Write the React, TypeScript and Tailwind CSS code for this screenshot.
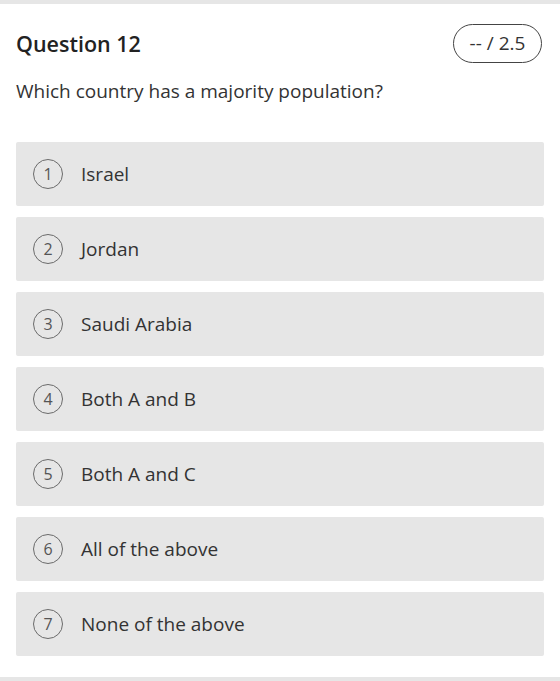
const options = [
  "Israel",
  "Jordan",
  "Saudi Arabia",
  "Both A and B",
  "Both A and C",
  "All of the above",
  "None of the above",
];

export default function App() {
  return (
    <div
      className="w-[560px] h-[681px] bg-white flex flex-col text-[#333333]"
      style={{ fontFamily: '"Open Sans", sans-serif' }}
    >
      <div className="h-[4px] bg-[#e6e6e6]" />
      <div className="flex-1 px-4">
        <div className="flex items-center justify-between pt-[20px]">
          <h2 className="text-[21.5px] font-semibold text-[#222222] leading-[30px]">Question 12</h2>
          <div className="h-[39px] w-[89px] rounded-full border-[1.5px] border-[#444444] flex items-center justify-center text-[19px] text-[#333333] mr-[2px]">
            -- / 2.5
          </div>
        </div>
        <p className="mt-[14px] text-[19px] leading-[28px] text-[#333333]">
          Which country has a majority population?
        </p>
        <ul className="mt-[37px] flex flex-col gap-[11px]">
          {options.map((opt, i) => (
            <li
              key={opt}
              className="h-[64px] bg-[#e6e6e6] rounded-[2px] flex items-center pl-[17px]"
            >
              <span className="w-[30px] h-[30px] rounded-full border-[1.5px] border-[#6b6b6b] flex items-center justify-center text-[16px] text-[#555555]">
                {i + 1}
              </span>
              <span className="ml-[18px] text-[19px] text-[#333333]">{opt}</span>
            </li>
          ))}
        </ul>
      </div>
      <div className="h-[4px] bg-[#e6e6e6]" />
    </div>
  );
}
